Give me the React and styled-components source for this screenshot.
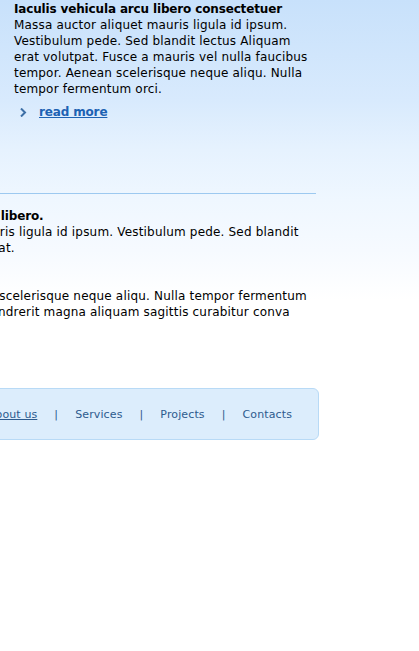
import React from 'react';
import styled, { createGlobalStyle } from 'styled-components';

// the page is wider than the window: its left part is scrolled out of view
const HIDDEN = 160;

const GlobalStyle = createGlobalStyle`
  html, body {
    margin: 0;
    padding: 0;
  }
  body {
    font-family: "DejaVu Sans", Verdana, sans-serif;
    font-size: 12px;
    line-height: 16px;
    letter-spacing: 0.18px;
    color: #000;
    background: #fff linear-gradient(to bottom, #c8e1fb 0px, #d8eafd 100px, #e6f2fe 150px, #eff7ff 200px, #f6faff 250px, #fff 300px) no-repeat;
    overflow: hidden;
  }
`;

const Page = styled.div`
  width: ${HIDDEN + 319}px;
  margin-left: -${HIDDEN}px;
`;

const Header = styled.div`
  height: 192px;
  margin-right: 3px;
  padding: 1px 0 0 ${HIDDEN + 14}px;
  border-bottom: 1px solid #9dc9f0;
`;

const News = styled.div`
  width: 302px;
`;

const Title = styled.h3`
  margin: 0;
  font-size: 12px;
  font-weight: bold;
  letter-spacing: -0.15px;
`;

const Text = styled.p`
  margin: ${({ $gap }) => $gap || 0}px 0 0;
`;

const More = styled.a`
  display: flex;
  align-items: center;
  gap: 12px;
  margin: 7px 0 0 6px;
  color: #1d62b3;
  font-weight: bold;
  letter-spacing: -0.15px;
  text-decoration: underline;
  cursor: pointer;
`;

const Main = styled.div`
  padding: 14px 0 0;
  margin-right: 3px;
`;

const Footer = styled.div`
  display: flex;
  align-items: center;
  justify-content: flex-end;
  height: 48px;
  margin-top: 68px;
  padding: 2px 26px 0 0;
  background: #dcedfc;
  border: 1px solid #b8daf6;
  border-radius: 6px;
  font-size: 11px;
  letter-spacing: 0.12px;
`;

const NavLink = styled.a`
  color: #2d5b8e;
  text-decoration: ${({ $active }) => ($active ? 'underline' : 'none')};
  cursor: pointer;
`;

const Sep = styled.span`
  margin: 0 17px;
  color: #2d5b8e;
`;

const Chevron = () => (
  <svg width="7" height="9" viewBox="0 0 7 9">
    <polyline points="1,0.5 5,4.5 1,8.5" fill="none" stroke="#3d6fa6" strokeWidth="2" />
  </svg>
);

const links = ['Home', 'About us', 'Services', 'Projects', 'Contacts'];

export default function App() {
  return (
    <>
      <GlobalStyle />
      <Page>
        <Header>
          <News>
            <Title>Iaculis vehicula arcu libero consectetuer</Title>
            <Text>
              Massa auctor aliquet mauris ligula id ipsum. Vestibulum pede. Sed blandit lectus Aliquam
              erat volutpat. Fusce a mauris vel nulla faucibus tempor. Aenean scelerisque neque aliqu.
              Nulla tempor fermentum orci.
            </Text>
            <More>
              <Chevron />
              read more
            </More>
          </News>
        </Header>
        <Main>
          <Title>Curabitur vehicula urna libero.</Title>
          <Text>
            Massa auctor aliquet mauris ligula id ipsum. Vestibulum pede. Sed blandit lectus aliquam
            erit volutpat.
          </Text>
          <Text $gap={32}>
            Fusce ac tempor. Aenean scelerisque neque aliqu. Nulla tempor fermentum Donec at urna et
            vitae hendrerit magna aliquam sagittis curabitur conva
          </Text>
        </Main>
        <Footer>
          {links.map((l, i) => (
            <React.Fragment key={l}>
              {i > 0 && <Sep>|</Sep>}
              <NavLink $active={l === 'About us'}>{l}</NavLink>
            </React.Fragment>
          ))}
        </Footer>
      </Page>
    </>
  );
}
